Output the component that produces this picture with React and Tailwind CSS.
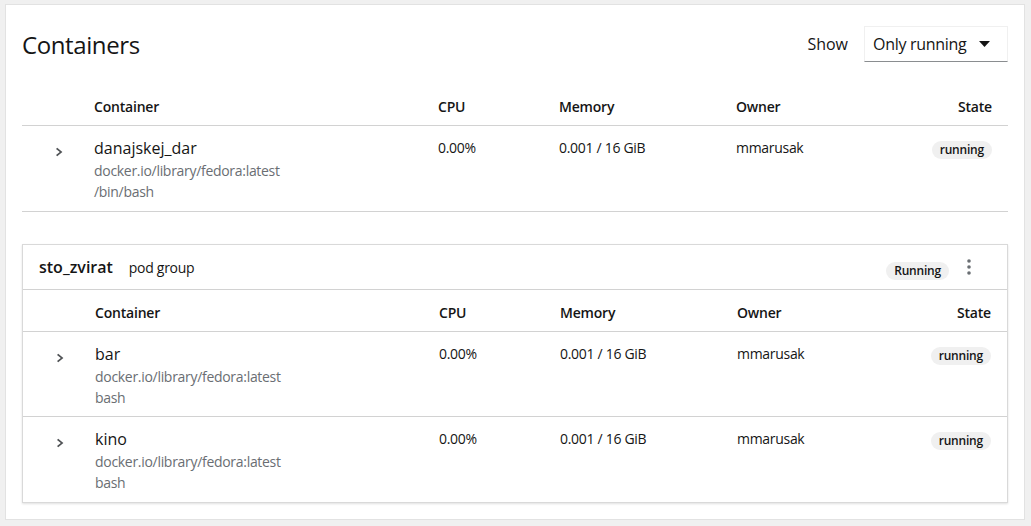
import React from "react";

const FONT = { fontFamily: '"Open Sans", "Liberation Sans", sans-serif' };
const COLS = "grid grid-cols-[72px_344px_121px_177px_1fr_140px]";

function Chevron() {
  return (
    <svg width="8" height="10" viewBox="0 0 8 10" className="mt-[11px] ml-[34px]">
      <path d="M1.2 0.8 L6.4 5 L1.2 9.2 L0 7.9 L3.8 5 L0 2.1 Z" fill="#4f5255" />
    </svg>
  );
}

function Badge({ children, className = "" }) {
  return (
    <span className={"inline-flex items-center h-[18px] px-[8px] rounded-full bg-[#f0f0f0] text-[12px] font-semibold tracking-[-0.2px] text-[#151515] leading-none " + className}>
      {children}
    </span>
  );
}

function HeaderRow({ pt }) {
  return (
    <div className={COLS + " border-b border-[#d2d2d2] text-[14px] leading-[21px] font-semibold tracking-[-0.2px] text-[#151515] pb-[8px] " + pt}>
      <div />
      <div>Container</div>
      <div>CPU</div>
      <div>Memory</div>
      <div>Owner</div>
      <div className="text-right pr-[16px]">State</div>
    </div>
  );
}

function Row({ name, cmd, last, pb }) {
  return (
    <div className={COLS + " pt-[10px] " + pb + (last ? "" : " border-b border-[#d2d2d2]")}>
      <div><Chevron /></div>
      <div>
        <div className="text-[16px] leading-[24px] text-[#151515]">{name}</div>
        <div className="text-[14px] leading-[21px] tracking-[-0.3px] text-[#6a6e73]">docker.io/library/fedora:latest</div>
        <div className="text-[14px] leading-[21px] tracking-[-0.3px] text-[#6a6e73]">{cmd}</div>
      </div>
      <div className="text-[14px] leading-[24px] tracking-[-0.3px] text-[#151515]">0.00%</div>
      <div className="text-[14px] leading-[24px] tracking-[-0.3px] text-[#151515]">0.001 / 16 GiB</div>
      <div className="text-[14px] leading-[24px] tracking-[-0.3px] text-[#151515]">mmarusak</div>
      <div className="flex justify-end pr-[16px] pt-[5px]">
        <Badge>running</Badge>
      </div>
    </div>
  );
}

export default function App() {
  return (
    <div className="min-h-[526px] bg-[#f0f0f0] pt-[4px] pb-[6px]" style={FONT}>
      <div className="ml-[5px] mr-[6px] bg-white border border-[#e2e2e2] px-[16px] pt-[21px] pb-[16px]">
        <div className="flex items-center justify-between h-[36px]">
          <h1 className="text-[24px] leading-[30px] tracking-[-0.4px] text-[#151515] font-normal mt-[1px]">Containers</h1>
          <div className="flex items-center gap-[16px]">
            <span className="text-[16px] text-[#151515]">Show</span>
            <div className="flex items-center justify-between w-[144px] h-[36px] pl-[8px] pr-[17px] border border-[#f0f0f0] border-b-[#8a8d90] text-[16px] tracking-[-0.3px] text-[#151515]">
              <span>Only running</span>
              <svg width="11" height="6" viewBox="0 0 11 6">
                <path d="M0 0 H11 L5.5 6 Z" fill="#151515" />
              </svg>
            </div>
          </div>
        </div>

        <div className="mt-[23px]">
          <HeaderRow pt="pt-[11px]" />
          <Row name="danajskej_dar" cmd="/bin/bash" pb="pb-[9px]" />
        </div>

        <div className="mt-[32px] border border-[#d9d9d9] shadow-[0_1px_2px_rgba(0,0,0,0.12)]">
          <div className="flex items-center h-[45px] border-b border-[#d2d2d2] pl-[16px] pr-[36px]">
            <span className="text-[16px] font-semibold text-[#151515]">sto_zvirat</span>
            <span className="ml-[16px] text-[14px] tracking-[-0.3px] text-[#151515]">pod group</span>
            <div className="ml-auto flex items-center gap-[18px]">
              <Badge className="mt-[7px]">Running</Badge>
              <svg width="4" height="16" viewBox="0 0 4 16" className="-mt-[1px]">
                <circle cx="2" cy="2" r="1.8" fill="#6a6e73" />
                <circle cx="2" cy="8" r="1.8" fill="#6a6e73" />
                <circle cx="2" cy="14" r="1.8" fill="#6a6e73" />
              </svg>
            </div>
          </div>
          <HeaderRow pt="pt-[12px]" />
          <Row name="bar" cmd="bash" pb="pb-[8px]" />
          <Row name="kino" cmd="bash" pb="pb-[9px]" last />
        </div>
      </div>
    </div>
  );
}
